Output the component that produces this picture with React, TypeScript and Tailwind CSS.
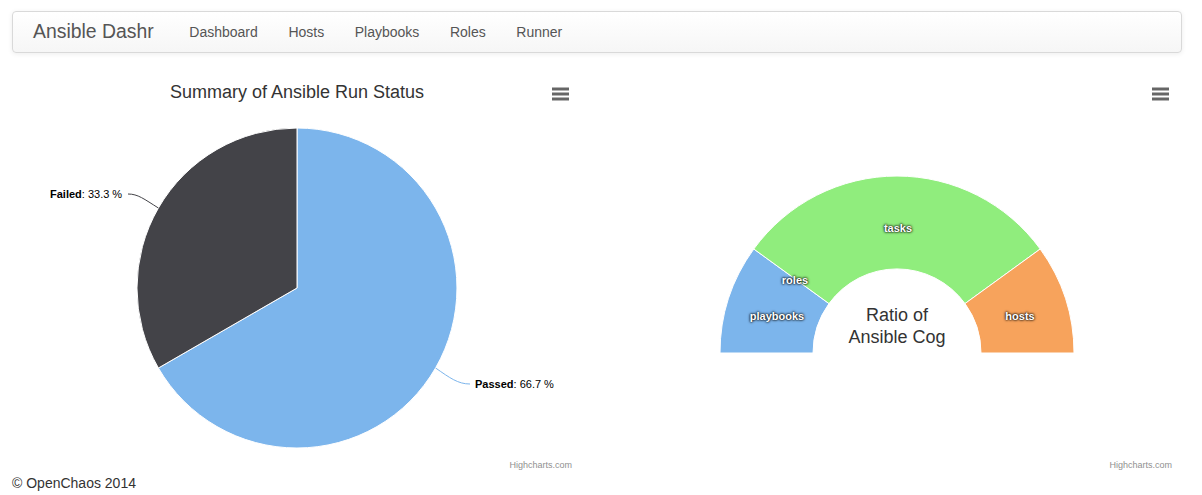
const navLinks = ["Dashboard", "Hosts", "Playbooks", "Roles", "Runner"];

const MenuButton = () => (
  <g stroke="#666" strokeWidth={3}>
    <line x1={540} y1={16} x2={557} y2={16} />
    <line x1={540} y1={21} x2={557} y2={21} />
    <line x1={540} y1={26} x2={557} y2={26} />
  </g>
);

const Credits = () => (
  <text x={560} y={395} textAnchor="end" fontSize={9} fill="#909090">
    Highcharts.com
  </text>
);

// pie: passed 66.7 / failed 33.3, starting at 12 o'clock
const RunStatusChart = () => (
  <svg width={570} height={400} className="block shrink-0">
    <text x={285} y={25} textAnchor="middle" fontSize={18} fill="#333">
      Summary of Ansible Run Status
    </text>
    <MenuButton />
    <path
      d="M 285 55 A 160 160 0 1 1 146.4 295 L 285 215 Z"
      fill="#7cb5ec"
      stroke="#fff"
      strokeWidth={1}
    />
    <path
      d="M 146.4 295 A 160 160 0 0 1 285 55 L 285 215 Z"
      fill="#434348"
      stroke="#fff"
      strokeWidth={1}
    />
    <path d="M 116 121 C 126 121, 132 126, 146.4 135" fill="none" stroke="#434348" strokeWidth={1} />
    <path d="M 423.6 295 C 438 305, 446 311, 458 311" fill="none" stroke="#7cb5ec" strokeWidth={1} />
    <text x={38} y={125} fontSize={11} fill="#000">
      <tspan fontWeight="bold">Failed</tspan>: 33.3 %
    </text>
    <text x={463} y={315} fontSize={11} fill="#000">
      <tspan fontWeight="bold">Passed</tspan>: 66.7 %
    </text>
    <Credits />
  </svg>
);

const DonutLabel = ({ x, y, label }: { x: number; y: number; label: string }) => (
  <text
    x={x}
    y={y}
    textAnchor="middle"
    fontSize={11}
    fontWeight="bold"
    fill="#fff"
    className="[text-shadow:0_0_3px_#000,0_0_2px_#000]"
  >
    {label}
  </text>
);

const CogChart = () => (
  <svg width={570} height={400} className="block shrink-0">
    <MenuButton />
    <g stroke="#fff" strokeWidth={1}>
      <path d="M 108 280 A 177 177 0 0 1 141.8 176 L 217 230.6 A 84 84 0 0 0 201 280 Z" fill="#7cb5ec" />
      <path d="M 141.8 176 A 177 177 0 0 1 428.2 176 L 353 230.6 A 84 84 0 0 0 217 230.6 Z" fill="#90ed7d" />
      <path d="M 428.2 176 A 177 177 0 0 1 462 280 L 369 280 A 84 84 0 0 0 353 230.6 Z" fill="#f7a35c" />
    </g>
    <DonutLabel x={165} y={247} label="playbooks" />
    <DonutLabel x={183} y={211} label="roles" />
    <DonutLabel x={286} y={159} label="tasks" />
    <DonutLabel x={408} y={247} label="hosts" />
    <text x={285} y={248} textAnchor="middle" fontSize={18} fill="#333">
      Ratio of
    </text>
    <text x={285} y={270} textAnchor="middle" fontSize={18} fill="#333">
      Ansible Cog
    </text>
    <Credits />
  </svg>
);

export default function App() {
  return (
    <div className="w-[1202px] h-[495px] overflow-hidden bg-white text-[#333] font-['Liberation_Sans',Arial,sans-serif]">
      <div className="pt-[11px] pl-[12px] pr-[20px]">
        <div className="h-[42px] flex items-center rounded-[4px] border border-[#d9d9d9] bg-gradient-to-b from-white to-[#f6f6f6] pl-[20px] shadow-[0_1px_5px_rgba(0,0,0,0.075)]">
          <span className="w-[141px] text-[19.4px] text-[#555]">Ansible Dashr</span>
          <nav className="flex">
            {navLinks.map((l) => (
              <span key={l} className="px-[15.3px] text-[14px] text-[#555]">
                {l}
              </span>
            ))}
          </nav>
        </div>
      </div>
      <div className="mt-[20px] flex gap-[30px] pl-[12px]">
        <RunStatusChart />
        <CogChart />
      </div>
      <div className="pl-[12px] text-[14px] leading-[20px]">© OpenChaos 2014</div>
    </div>
  );
}
